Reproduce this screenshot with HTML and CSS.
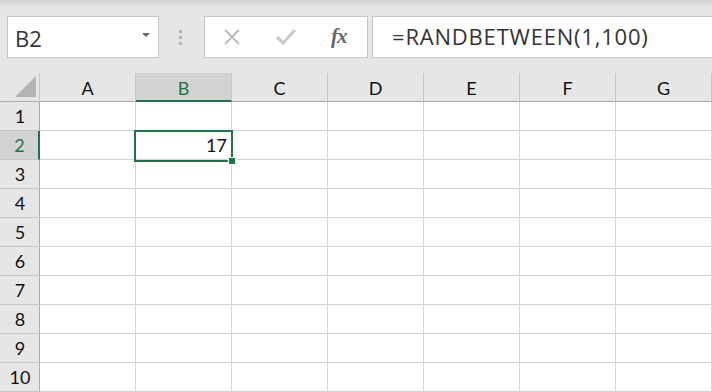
FILE: index.html
```html
<!DOCTYPE html>
<html lang="en">
<head>
  <meta charset="UTF-8">
  <title>Book1 - Excel</title>
  <link rel="stylesheet" href="styles.css">
</head>
<body>
  <div class="formula-bar">
    <div class="name-box">
      <span class="name-text">B2</span>
      <span class="name-arrow"></span>
    </div>
    <div class="grip"><i></i><i></i><i></i></div>
    <div class="fx-buttons">
      <svg class="btn-icon" width="20" height="20" viewBox="0 0 20 20">
        <path d="M3 3 L17 17 M17 3 L3 17" stroke="#bcbcbc" stroke-width="2" fill="none"/>
      </svg>
      <svg class="btn-icon" width="22" height="20" viewBox="0 0 22 20">
        <path d="M2 10 L8 16 L20 3" stroke="#c9c9c9" stroke-width="3.2" fill="none"/>
      </svg>
      <span class="fx">fx</span>
    </div>
    <div class="formula-input">=RANDBETWEEN(1,100)</div>
  </div>

  <div class="sheet">
    <div class="corner"><span class="corner-tri"></span></div>
    <div class="col-head">A</div>
    <div class="col-head active">B</div>
    <div class="col-head">C</div>
    <div class="col-head">D</div>
    <div class="col-head">E</div>
    <div class="col-head">F</div>
    <div class="col-head">G</div>

    <div class="row-head">1</div>
    <div class="cell"></div><div class="cell"></div><div class="cell"></div><div class="cell"></div><div class="cell"></div><div class="cell"></div><div class="cell"></div>
    <div class="row-head active">2</div>
    <div class="cell"></div><div class="cell num">17</div><div class="cell"></div><div class="cell"></div><div class="cell"></div><div class="cell"></div><div class="cell"></div>
    <div class="row-head">3</div>
    <div class="cell"></div><div class="cell"></div><div class="cell"></div><div class="cell"></div><div class="cell"></div><div class="cell"></div><div class="cell"></div>
    <div class="row-head">4</div>
    <div class="cell"></div><div class="cell"></div><div class="cell"></div><div class="cell"></div><div class="cell"></div><div class="cell"></div><div class="cell"></div>
    <div class="row-head">5</div>
    <div class="cell"></div><div class="cell"></div><div class="cell"></div><div class="cell"></div><div class="cell"></div><div class="cell"></div><div class="cell"></div>
    <div class="row-head">6</div>
    <div class="cell"></div><div class="cell"></div><div class="cell"></div><div class="cell"></div><div class="cell"></div><div class="cell"></div><div class="cell"></div>
    <div class="row-head">7</div>
    <div class="cell"></div><div class="cell"></div><div class="cell"></div><div class="cell"></div><div class="cell"></div><div class="cell"></div><div class="cell"></div>
    <div class="row-head">8</div>
    <div class="cell"></div><div class="cell"></div><div class="cell"></div><div class="cell"></div><div class="cell"></div><div class="cell"></div><div class="cell"></div>
    <div class="row-head">9</div>
    <div class="cell"></div><div class="cell"></div><div class="cell"></div><div class="cell"></div><div class="cell"></div><div class="cell"></div><div class="cell"></div>
    <div class="row-head">10</div>
    <div class="cell"></div><div class="cell"></div><div class="cell"></div><div class="cell"></div><div class="cell"></div><div class="cell"></div><div class="cell"></div>

    <div class="selection"><span class="fill-handle"></span></div>
  </div>
</body>
</html>
```

FILE: styles.css
```css
* { box-sizing: border-box; }
html, body { margin: 0; padding: 0; overflow: hidden; }
body { width: 712px; height: 392px; background: #fff; font-family: Lato, "Noto Sans", sans-serif; color: #111; }

/* formula bar */
.formula-bar {
  height: 73px; display: flex; align-items: flex-start;
  padding: 16px 0 0 7px;
  background: linear-gradient(180deg, #d0d0d0 0px, #e0e0e0 5px, #e6e6e6 9px);
}
.name-box {
  width: 152px; height: 42px; background: #fff; border: 1px solid #c6c6c6;
  display: flex; align-items: center; justify-content: space-between; padding: 0 8px 0 7px;
}
.name-text { font-family: "Open Sans", sans-serif; font-size: 22px; color: #333; margin-top: 2px; }
.name-arrow { width: 0; height: 0; border-left: 4px solid transparent; border-right: 4px solid transparent; border-top: 4px solid #666; margin-top: -4px; }
.grip { width: 45px; height: 42px; display: flex; flex-direction: column; align-items: center; justify-content: center; gap: 3px; padding-right: 2px; }
.grip i { display: block; width: 3px; height: 3px; background: #b4b4b4; }
.fx-buttons {
  width: 164px; height: 42px; background: #fff; border: 1px solid #c6c6c6;
  display: flex; align-items: center; padding: 0 0 0 17px;
}
.btn-icon { display: block; }
.btn-icon + .btn-icon { margin-left: 33px; }
.fx { margin-left: 34px; font-family: "Liberation Serif", serif; font-style: italic; font-weight: bold; font-size: 21px; color: #666; letter-spacing: -1px; margin-top: -2px; }
.formula-input {
  flex: 1; height: 42px; margin-left: 4px; background: #fff; border: 1px solid #c6c6c6; border-right: none;
  padding: 4px 0 0 19px; font-family: "Open Sans", sans-serif; font-size: 22px; line-height: 30px; color: #333; letter-spacing: 0.8px;
}

/* grid */
.sheet { position: relative; display: grid; grid-template-columns: 40px repeat(7, 96px); grid-auto-rows: 29px; }
.corner { background: #e6e6e6; border-right: 1px solid #c6c6c6; border-bottom: 1px solid #ababab; position: relative; }
.corner-tri { position: absolute; right: 3px; bottom: 4px; width: 0; height: 0; border-left: 21px solid transparent; border-bottom: 21px solid #b4b4b4; }
.col-head {
  background: #e6e6e6; border-right: 1px solid #c6c6c6; border-bottom: 1px solid #ababab;
  display: flex; align-items: center; justify-content: center; font-size: 18px; padding-top: 1px;
}
.col-head.active { background: #d2d2d2; color: #217346; border-bottom: 2px solid #217346; padding-top: 2px; }
.row-head {
  background: #e6e6e6; border-right: 1px solid #ababab; border-bottom: 1px solid #c6c6c6;
  display: flex; align-items: center; justify-content: center; font-size: 18px; padding-left: 1px;
}
.row-head.active { background: #d2d2d2; color: #217346; border-right: 2px solid #217346; }
.cell { border-right: 1px solid #d4d4d4; border-bottom: 1px solid #d4d4d4; }
.cell.num { display: flex; align-items: center; justify-content: flex-end; padding-right: 4px; font-size: 18px; }

.selection { position: absolute; left: 134px; top: 57px; width: 99px; height: 32px; border: 2px solid #217346; pointer-events: none; }
.fill-handle { position: absolute; right: -5px; bottom: -5px; width: 8px; height: 8px; background: #217346; border: 1px solid #fff; }
```
